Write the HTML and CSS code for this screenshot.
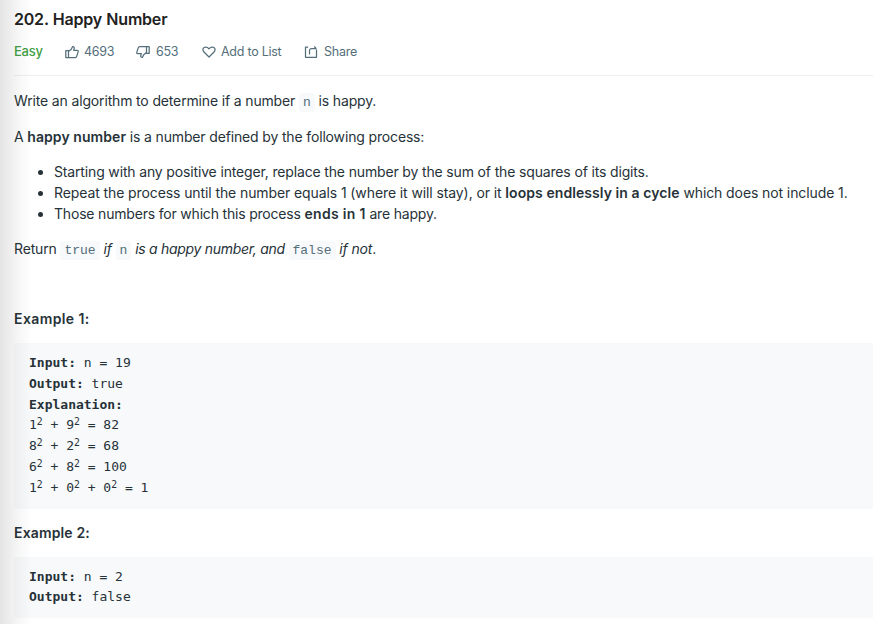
FILE: index.html
```html
<!DOCTYPE html>
<html lang="en">
<head>
<meta charset="utf-8">
<title>Happy Number</title>
<link rel="stylesheet" href="styles.css">
</head>
<body>
<main class="problem">
  <header class="head">
    <h1 class="title">202. Happy Number</h1>
    <div class="meta">
      <span class="easy">Easy</span>
      <button class="action likes"><svg viewBox="0 0 14 14"><path d="M.8 5.700h2.700v6.800H.8zM3.500 6.500 6.300 4.300 7.600 1.600c1.300-.2 1.900.8 1.600 1.900L8.700 5.300h3.500c.8 0 1.200.6 1 1.300l-1.500 4.800c-.2.800-.7 1.100-1.500 1.100H3.500"/></svg><span>4693</span></button>
      <button class="action dislikes"><svg viewBox="0 0 14 14"><path d="M13.200 8.300h-2.700V1.500h2.700zM10.500 7.500 7.700 9.700 6.400 12.400c-1.300.2-1.900-.8-1.600-1.900L5.300 8.700H1.800c-.8 0-1.200-.6-1-1.300l1.500-4.800c.2-.8.7-1.100 1.500-1.100h6.700"/></svg><span>653</span></button>
      <button class="action list"><svg viewBox="0 0 14 14"><path d="M7 12 2.200 7.300C-.2 4.700 1.200 2.200 3.700 2.200 5.100 2.200 6.200 2.800 7 3.800 7.800 2.800 8.900 2.200 10.300 2.200 12.800 2.200 14.200 4.700 11.800 7.300z"/></svg><span>Add to List</span></button>
      <button class="action share"><svg viewBox="0 0 14 14"><path d="M4.200 2H1.500v10.300h11V4.500M5.500 9.500V5.800c0-1.500.7-2.200 2.200-2.200h4.600M10.200 1.500l2.200 2.100"/></svg><span>Share</span></button>
    </div>
  </header>
  <article class="content">
    <p class="intro">Write an algorithm to determine if a number <code>n</code> is happy.</p>
    <p>A <strong>happy number</strong> is a number defined by the following process:</p>
    <ul>
      <li>Starting with any positive integer, replace the number by the sum of the squares of its digits.</li>
      <li class="repeat">Repeat the process until the number equals 1 (where it will stay), or it <strong>loops endlessly in a cycle</strong> which does not include 1.</li>
      <li class="ends">Those numbers for which this process <strong>ends in 1</strong> are happy.</li>
    </ul>
    <p>Return <code>true</code> <em>if</em> <code>n</code> <em class="phrase">is a happy number, and</em> <code>false</code> <em>if not</em>.</p>
    <p>&nbsp;</p>
    <p class="example"><strong>Example 1:</strong></p>
<pre><strong>Input:</strong> n = 19
<strong>Output:</strong> true
<strong>Explanation:</strong>
1<sup>2</sup> + 9<sup>2</sup> = 82
8<sup>2</sup> + 2<sup>2</sup> = 68
6<sup>2</sup> + 8<sup>2</sup> = 100
1<sup>2</sup> + 0<sup>2</sup> + 0<sup>2</sup> = 1
</pre>
    <p class="example second"><strong>Example 2:</strong></p>
<pre><strong>Input:</strong> n = 2
<strong>Output:</strong> false
</pre>
  </article>
</main>
</body>
</html>
```
FILE: styles.css
```css
* { box-sizing: border-box; }
html, body { margin: 0; height: 100%; overflow: hidden; background: #fff; }
body { font: 14px/21px Inter, sans-serif; color: #263238; }
.problem { position: relative; height: 624px; overflow: hidden; padding-left: 14px; }
.problem::before {
  content: ""; position: absolute; inset: 0 auto 0 0; width: 32px; z-index: 1;
  background: linear-gradient(90deg, rgba(0,0,0,.105), rgba(0,0,0,.075) 25%, rgba(0,0,0,.03) 60%, transparent);
}
.head { height: 76px; border-bottom: 1px solid #eee; padding-top: 8px; }
.title { margin: 0; font-size: 16px; line-height: 22px; font-weight: 600; color: #212121; letter-spacing: -.2px; word-spacing: .5px; }
.meta { display: flex; align-items: center; margin-top: 11px; height: 21px; font-size: 12.5px; color: #546e7a; }
.easy { width: 51px; color: #43a047; font-weight: 500; font-size: 13px; letter-spacing: -.25px; }
.action { display: flex; align-items: center; gap: 6px; padding: 0; border: 0; background: none; color: inherit; font: inherit; letter-spacing: -.25px; white-space: nowrap; }
.action svg { width: 14px; height: 14px; fill: none; stroke: currentColor; stroke-width: 1.25; stroke-linejoin: round; flex: none; }
.likes { width: 71px; gap: 5px; }
.dislikes { width: 66px; }
.list { width: 102px; gap: 5px; }
.content { padding-top: 14px; white-space: nowrap; letter-spacing: -.153px; }
p { height: 21px; margin: 0 0 14px; }
.intro { margin-bottom: 15px; }
ul { margin: 0 0 14px; padding-left: 40px; }
strong { font-weight: 600; letter-spacing: .07px; }
.repeat { letter-spacing: -.1px; }
.ends { letter-spacing: -.19px; }
.ends strong { letter-spacing: .3px; }
.phrase { letter-spacing: -.3px; }
code { padding: 2px 4px; border-radius: 3px; background: #f7f9fa; color: #546e7a; font: 13px "Liberation Mono", monospace; letter-spacing: 0; }
.example strong { letter-spacing: .4px; }
.example.second strong { letter-spacing: .15px; }
pre { margin: 0 0 14px; padding: 10px 15px; border-radius: 3px 0 0 3px; background: #f7f9fa; font: 13px/20.8px "DejaVu Sans Mono", monospace; letter-spacing: 0; }
pre strong { font-weight: 700; letter-spacing: 0; }
pre + .example { margin-top: -.6px; }
pre:last-child { line-height: 20.4px; }
sup { position: relative; top: -.42em; vertical-align: baseline; font-size: 75%; line-height: 0; }
```
